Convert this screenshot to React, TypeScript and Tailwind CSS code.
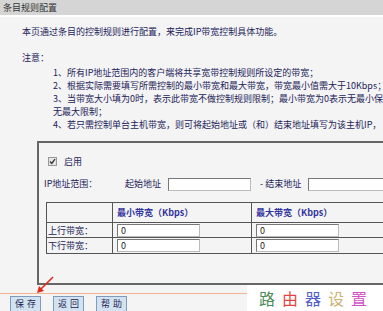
import React from 'react'

const notes = [
  '1、所有IP地址范围内的客户端将共享宽带控制规则所设定的带宽；',
  '2、根据实际需要填写所需控制的最小带宽和最大带宽，带宽最小值需大于10Kbps；',
  '3、当带宽大小填为0时，表示此带宽不做控制规则限制；最小带宽为0表示无最小保证，最大带宽为0表示',
  '无最大限制；',
  '4、若只需控制单台主机带宽，则可将起始地址或（和）结束地址填写为该主机IP，',
]

const Field: React.FC<{ w: string; value?: string }> = ({ w, value }) => (
  <div
    className={`${w} h-[13px] bg-white border border-t-[#777] border-l-[#777] border-r-[#bbb] border-b-[#bbb] px-[3px] text-[9px] leading-[11px] text-[#222]`}
  >
    {value}
  </div>
)

const Btn: React.FC<{ label: string }> = ({ label }) => (
  <div className="h-[16px] w-[31px] bg-[#d3e2f1] border border-[#7f9bbb] text-[9px] leading-[14px] text-center text-[#1e2550] tracking-[3px] pl-[3px]">
    {label}
  </div>
)

export default function App() {
  return (
    <div
      className="relative w-[383px] h-[311px] overflow-hidden bg-[#f4f4f4] text-[#23235a] whitespace-nowrap"
      style={{ fontFamily: '"Noto Sans CJK SC", "Noto Sans", sans-serif' }}
    >
      <div className="w-[560px]">
        {/* title bar */}
        <div className="h-[15px] bg-[#d5d5d5] px-[3px] text-[9px] leading-[15px] text-[#333]">条目规则配置</div>
        <div className="h-[2px] bg-white" />

        {/* intro */}
        <div className="pl-[22px] pt-[8px] text-[9px] leading-[13px]">
          本页通过条目的控制规则进行配置，来完成IP带宽控制具体功能。
        </div>
        <div className="pl-[22px] mt-[13px] text-[9px] leading-[13px]">注意：</div>
        <div className="pl-[53px] mt-[2px] text-[9px] leading-[13px]">
          {notes.map((n) => (
            <div key={n}>{n}</div>
          ))}
        </div>

        {/* rule box */}
        <div className="ml-[37px] mt-[10px] h-[144px] border-t-2 border-l-2 border-b-2 border-[#666] pt-[12px]">
          <div className="flex items-center h-[13px] pl-[9px] text-[9px]">
            <div className="w-[9px] h-[9px] border border-[#999] bg-[#e6e6e6] flex items-center justify-center">
              <svg width="7" height="7" viewBox="0 0 7 7">
                <path d="M1 3.5 L2.8 5.5 L6 1.2" stroke="#333" strokeWidth="1.3" fill="none" />
              </svg>
            </div>
            <span className="ml-[7px]">启用</span>
          </div>

          <div className="flex items-center h-[14px] mt-[9px] pl-[5px] text-[9px]">
            <span className="w-[81px]">IP地址范围：</span>
            <span className="w-[43px]">起始地址</span>
            <Field w="w-[83px]" />
            <span className="ml-[9px] w-[48px]">- 结束地址</span>
            <Field w="w-[100px]" />
          </div>

          <div className="ml-[7px] mt-[11px] w-[360px] border border-[#555] text-[9px]">
            <div className="flex h-[20px] border-b border-[#555]">
              <div className="w-[66px] border-r border-[#555]" />
              <div className="w-[139px] border-r border-[#555] pl-[4px] leading-[20px] text-[#3535a0] font-semibold">最小带宽（Kbps）</div>
              <div className="flex-1 pl-[4px] leading-[20px] text-[#3535a0] font-semibold">最大带宽（Kbps）</div>
            </div>
            {['上行带宽：', '下行带宽：'].map((label, i) => (
              <div key={label} className={`flex h-[15px] ${i === 0 ? 'border-b border-[#555]' : ''}`}>
                <div className="w-[66px] border-r border-[#555] pl-[1px] leading-[15px]">{label}</div>
                <div className="w-[139px] border-r border-[#555] pl-[4px] flex items-center">
                  <Field w="w-[83px]" value="0" />
                </div>
                <div className="flex-1 pl-[4px] flex items-center">
                  <Field w="w-[83px]" value="0" />
                </div>
              </div>
            ))}
          </div>
        </div>

        {/* separator + buttons */}
        <div className="mt-[8px] h-[1px] bg-[#f2b48c]" />
        <div className="flex gap-[12px] pl-[10px] mt-[2px]">
          <Btn label="保存" />
          <Btn label="返回" />
          <Btn label="帮助" />
        </div>
      </div>

      {/* red arrow annotation */}
      <svg className="absolute left-[30px] top-[272px]" width="30" height="26" viewBox="0 0 30 26">
        <path d="M23 5 L10 18" stroke="#e02a1a" strokeWidth="1.6" fill="none" />
        <path d="M7 21 L9 14 L14 19 Z" fill="#e02a1a" />
      </svg>

      {/* watermark */}
      <div className="absolute left-[247px] top-[285px] w-[136px] h-[26px] bg-white flex items-center pl-[12px] text-[16px] tracking-[7px]">
        <span className="text-[#4b8a58]">路</span>
        <span className="text-[#e5453f]">由</span>
        <span className="text-[#5260c8]">器</span>
        <span className="text-[#c9b272]">设</span>
        <span className="text-[#d353c4]">置</span>
      </div>
    </div>
  )
}
